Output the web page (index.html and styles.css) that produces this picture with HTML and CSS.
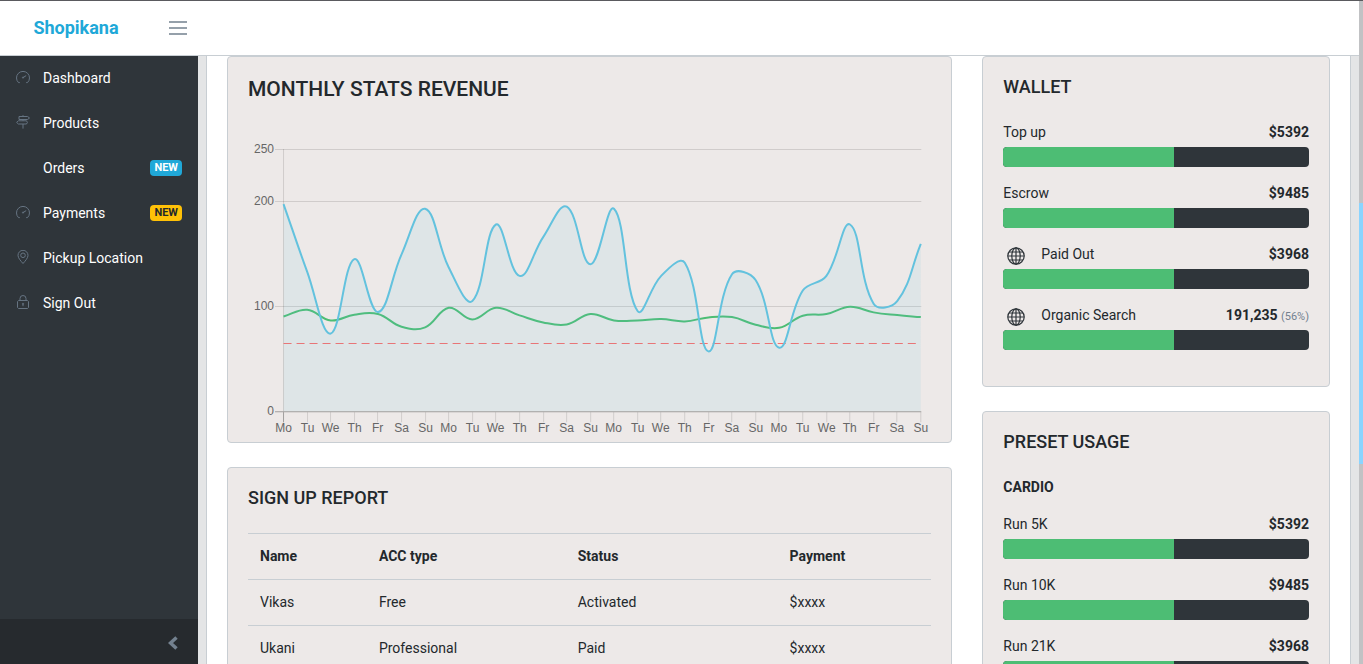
FILE: index.html
```html
<!DOCTYPE html>
<html lang="en">
<head>
<meta charset="utf-8">
<title>Shopikana</title>
<link rel="stylesheet" href="styles.css">
</head>
<body>
<svg class="sprite" aria-hidden="true">
  <symbol id="i-speed" viewBox="0 0 14 14"><path d="M3.800 12.600H2.500A6.500 6.500 0 1 1 11.500 12.600H10.200M7 7.600L10.200 5.600"/><circle cx="7" cy="7.600" r=".6"/></symbol>
  <symbol id="i-sign" viewBox="0 0 14 14"><path d="M3 1.500H11.600L13.500 3 11.600 4.500H3ZM10.500 5.800H2.400L.6 7.400 2.400 9H10.500L11.400 7.400ZM7 .2V1.500M7 4.500V5.800M7 9V13.600"/></symbol>
  <symbol id="i-pin" viewBox="0 0 14 14"><path d="M7 13.500C4.500 10.600 2 8 2 5.300A5 5 0 0 1 12 5.300C12 8 9.500 10.600 7 13.500Z"/><circle cx="7" cy="5.300" r="2.300"/></symbol>
  <symbol id="i-lock" viewBox="0 0 14 14"><path d="M2.600 5.500H11.400L12.500 6.500V12.500L11.500 13.500H2.500L1.500 12.500V6.500ZM4 5.500V3.500A3 3 0 0 1 10 3.500V5.500M7 9V11.200"/><circle cx="7" cy="8.800" r=".6"/></symbol>
  <symbol id="i-globe" viewBox="0 0 18 18"><circle cx="9" cy="9" r="8.200"/><ellipse cx="9" cy="9" rx="4.200" ry="8.200"/><path d="M9 .8V17.200M.8 9H17.200M2 5H16M2 13H16"/></symbol>
</svg>
<div class="app">
  <header class="topbar">
    <a class="brand" href="#">Shopikana</a>
    <button class="toggler" type="button" aria-label="Toggle menu"><svg viewBox="0 0 18 16"><path d="M0 2H18M0 8H18M0 14H18"/></svg></button>
  </header>
  <div class="body">
    <nav class="sidebar">
      <ul class="menu">
        <li><a href="#"><svg class="icon"><use href="#i-speed"/></svg>Dashboard</a></li>
        <li><a href="#"><svg class="icon"><use href="#i-sign"/></svg>Products</a></li>
        <li><a href="#"><span class="icon"></span>Orders<span class="badge">NEW</span></a></li>
        <li><a href="#"><svg class="icon"><use href="#i-speed"/></svg>Payments<span class="badge warn">NEW</span></a></li>
        <li><a href="#"><svg class="icon"><use href="#i-pin"/></svg>Pickup Location</a></li>
        <li><a href="#"><svg class="icon"><use href="#i-lock"/></svg>Sign Out</a></li>
      </ul>
      <button class="minimizer" type="button" aria-label="Minimize sidebar"><svg viewBox="0 0 10 14"><path d="M8.500 1.500L2.500 7L8.500 12.500"/></svg></button>
    </nav>
    <main class="main">
      <div class="panel">
        <div class="col wide">
          <section class="card chart-card">
            <h2 class="title large">MONTHLY STATS REVENUE</h2>
            <svg class="chart" id="chart" viewBox="0 0 683 324" role="img" aria-label="Monthly revenue"></svg>
          </section>
          <section class="card">
            <h3 class="title">SIGN UP REPORT</h3>
            <table class="report">
              <thead><tr><th class="c-name">Name</th><th class="c-type">ACC type</th><th class="c-status">Status</th><th>Payment</th></tr></thead>
              <tbody>
                <tr><td>Vikas</td><td>Free</td><td>Activated</td><td>$xxxx</td></tr>
                <tr><td>Ukani</td><td>Professional</td><td>Paid</td><td>$xxxx</td></tr>
              </tbody>
            </table>
          </section>
        </div>
        <div class="col narrow">
          <section class="card">
            <h3 class="title">WALLET</h3>
            <div class="meter"><div class="meter-head">Top up<b>$5392</b></div><div class="bar"><div class="fill"></div></div></div>
            <div class="meter"><div class="meter-head">Escrow<b>$9485</b></div><div class="bar"><div class="fill"></div></div></div>
            <div class="meter"><div class="meter-head"><svg class="globe"><use href="#i-globe"/></svg>Paid Out<b>$3968</b></div><div class="bar"><div class="fill"></div></div></div>
            <div class="meter"><div class="meter-head"><svg class="globe"><use href="#i-globe"/></svg>Organic Search<b>191,235 <small>(56%)</small></b></div><div class="bar"><div class="fill"></div></div></div>
          </section>
          <section class="card">
            <h3 class="title">PRESET USAGE</h3>
            <h4 class="group">CARDIO</h4>
            <div class="meter"><div class="meter-head">Run 5K<b>$5392</b></div><div class="bar"><div class="fill"></div></div></div>
            <div class="meter"><div class="meter-head">Run 10K<b>$9485</b></div><div class="bar"><div class="fill"></div></div></div>
            <div class="meter"><div class="meter-head">Run 21K<b>$3968</b></div><div class="bar"><div class="fill"></div></div></div>
          </section>
        </div>
      </div>
    </main>
  </div>
  <div class="scroll"><div class="thumb"></div></div>
</div>
<script src="chart.js"></script>
</body>
</html>
```
FILE: chart.js
```js
const revenue = [197.5, 133, 74, 145, 94.5, 149.5, 193, 137, 105, 178, 129, 166, 195, 140, 193, 95.5, 129, 141.5, 57, 130.5, 125, 60.5, 115, 129, 178, 102.5, 105, 159.5];
const average = [90.3, 96.7, 86.5, 92, 92.6, 80.5, 79.9, 98.6, 87.5, 98.6, 91.3, 84.6, 82.7, 92.6, 86.5, 86.5, 87.8, 85.6, 89.4, 89.7, 82.4, 79.5, 91, 92.6, 99.6, 94.2, 91.6, 89.7];
const days = ['Mo', 'Tu', 'We', 'Th', 'Fr', 'Sa', 'Su'];
const limit = 65;
const plot = { left: 35.5, right: 672.5, top: 31, bottom: 293, max: 250 };

const xAt = i => plot.left + (plot.right - plot.left) * i / (revenue.length - 1);
const yAt = v => plot.bottom - (plot.bottom - plot.top) * v / plot.max;

// Cardinal-like spline whose handles are weighted by the distance to each neighbour.
function curve(values, tension = 0.4) {
  const pts = values.map((v, i) => ({ x: xAt(i), y: yAt(v) }));
  const handles = pts.map((p, i) => {
    const a = pts[i - 1] || p;
    const b = pts[i + 1] || p;
    const da = Math.hypot(p.x - a.x, p.y - a.y);
    const db = Math.hypot(b.x - p.x, b.y - p.y);
    const fa = tension * da / (da + db);
    const fb = tension * db / (da + db);
    return {
      before: [p.x - fa * (b.x - a.x), p.y - fa * (b.y - a.y)],
      after: [p.x + fb * (b.x - a.x), p.y + fb * (b.y - a.y)]
    };
  });
  let d = `M${pts[0].x} ${pts[0].y}`;
  for (let i = 1; i < pts.length; i++) {
    d += `C${handles[i - 1].after} ${handles[i].before} ${pts[i].x} ${pts[i].y}`;
  }
  return d;
}

let out = '';
[0, 100, 200, 250].forEach(v => {
  const y = Math.floor(yAt(v)) + 0.5;
  out += `<path class="${v ? 'grid' : 'grid zero'}" d="M27 ${y}H673"/><text class="tick end" x="26" y="${y + 3.5}">${v}</text>`;
});
out += `<path class="grid" d="M35.5 31V293"/>`;
revenue.forEach((v, i) => {
  const x = Math.floor(xAt(i)) + 0.5;
  out += `<path class="${i ? 'grid' : 'grid zero'}" d="M${x} 294V304"/><text class="tick" x="${x}" y="314">${days[i % 7]}</text>`;
});
const line = curve(revenue);
out += `<path class="limit" d="M35.5 ${Math.round(yAt(limit)) + 0.5}H672.5"/>`;
out += `<path class="average" d="${curve(average)}"/>`;
out += `<path class="area" d="${line}V${plot.bottom}H${plot.left}Z"/><path class="revenue" d="${line}"/>`;
document.getElementById('chart').innerHTML = out;
```
FILE: styles.css
```css
* { box-sizing: border-box; }
body {
  margin: 0;
  background: #e4e5e6;
  color: #23282c;
  font: 14px/21px Roboto, "Liberation Sans", sans-serif;
}
.sprite { display: none; }
.app {
  display: grid;
  grid-template: 55px minmax(0, 1fr) / minmax(0, 1fr) 4px;
  height: 100vh;
  overflow: hidden;
  border-top: 1px solid #5a5a5e;
}
.topbar {
  display: flex;
  align-items: center;
  background: #fff;
  border-bottom: 1px solid #c8ced3;
}
.brand {
  width: 152px;
  padding-bottom: 2px;
  text-align: center;
  color: #20a8d8;
  font-size: 18px;
  font-weight: 700;
  text-decoration: none;
}
.toggler {
  display: flex;
  margin: 0 0 0 16px;
  padding: 0 1px;
  border: 0;
  background: none;
}
.toggler svg {
  width: 18px;
  height: 16px;
  fill: none;
  stroke: #73818f;
  stroke-width: 1.5;
}
.body {
  grid-row: 2;
  display: flex;
  min-height: 0;
}
.sidebar {
  display: flex;
  flex: none;
  flex-direction: column;
  justify-content: space-between;
  width: 198px;
  background: #2f353a;
}
.menu { margin: 0; padding: 0; list-style: none; }
.menu a {
  display: flex;
  align-items: center;
  padding: 12px 16px;
  color: #fff;
  text-decoration: none;
}
.icon {
  width: 14px;
  height: 14px;
  margin: 0 13px 3px 0;
  fill: none;
  stroke: #667482;
}
.badge {
  margin: 0 0 2px auto;
  padding: 0 4px;
  border-radius: 4px;
  background: #20a8d8;
  font-size: 11px;
  font-weight: 700;
  line-height: 16px;
}
.badge.warn { background: #ffc107; color: #23282c; }
.minimizer {
  display: flex;
  align-items: center;
  justify-content: flex-end;
  height: 45px;
  padding: 2px 20px 0 0;
  border: 0;
  background: #262a2e;
}
.minimizer svg {
  width: 10px;
  height: 14px;
  fill: none;
  stroke: #73818f;
  stroke-width: 3.5;
}
.main { flex: 1; min-width: 0; padding: 0 8px; overflow: hidden; }
.panel {
  display: flex;
  padding: 0 5px;
  min-height: 100%;
  border: solid #c8ced3;
  border-width: 0 1px;
  background: #fff;
}
.col { padding: 0 15px; }
.wide { width: 66.6667%; }
.narrow { width: 33.3333%; }
.card {
  margin-bottom: 24px;
  padding: 20px;
  border: 1px solid #c8ced3;
  border-radius: 4px;
  background: #ede9e8;
}
.chart-card { padding-bottom: 0; }
.title { margin: 0 0 26px; font-size: 18px; font-weight: 500; line-height: 19px; }
.title.large { margin-bottom: 16px; font-size: 21px; line-height: 25px; }
.chart { display: block; width: 100%; overflow: visible; }
.grid { stroke: rgba(0, 0, 0, .12); }
.zero { stroke: rgba(0, 0, 0, .32); }
.tick {
  fill: #666;
  font: 12px "Liberation Sans", Arial, sans-serif;
  text-anchor: middle;
}
.tick.end { text-anchor: end; }
.limit { stroke: #f86c6b; stroke-dasharray: 8 5; }
.area { fill: #63c2de; fill-opacity: .1; }
.average, .revenue { fill: none; stroke: #4dbd74; stroke-width: 2; }
.revenue { stroke: #63c2de; }
.report { width: 100%; border-collapse: collapse; table-layout: fixed; }
.report th, .report td {
  padding: 12px;
  border-top: 1px solid #c8ced3;
  text-align: left;
}
.c-name { width: 17.4%; }
.c-type { width: 29.1%; }
.c-status { width: 31%; }
.meter { margin-bottom: 16px; }
.meter-head { display: flex; align-items: center; height: 21px; margin-bottom: 4px; }
.meter-head b { margin-left: auto; }
.meter-head small { color: #73818f; font-size: 11px; font-weight: 400; }
.globe {
  align-self: flex-end;
  width: 18px;
  height: 18px;
  margin: 0 16px 0 4px;
  fill: none;
  stroke: #2f353a;
  stroke-width: 1.2;
}
.bar { height: 20px; border-radius: 4px; overflow: hidden; background: #2f353a; }
.fill { width: 56%; height: 100%; background: #4dbd74; }
.group { margin: 0 0 16px; font-size: 14px; }
.scroll { grid-column: 2; grid-row: 1 / 3; padding-top: 202px; background: #c1c2c4; }
.thumb { height: 261px; background: #8ad4ff; }
```
